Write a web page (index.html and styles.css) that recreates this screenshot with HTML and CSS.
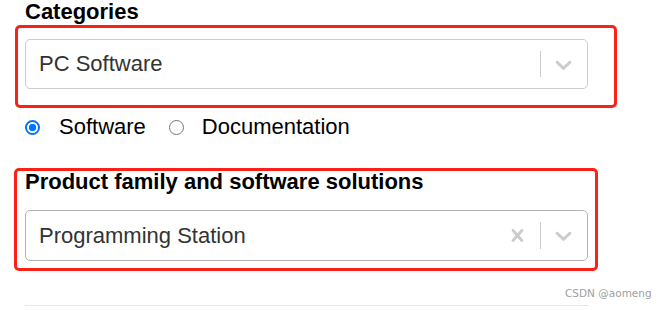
FILE: index.html
```html
<!DOCTYPE html>
<html>
<head>
<meta charset="utf-8">
<link rel="stylesheet" href="styles.css">
</head>
<body>
<div class="page">
  <div class="field">
    <div class="label">Categories</div>
    <div class="select">
      <div class="value">PC Software</div>
      <div class="indicators">
        <span class="sep"></span>
        <span class="ind"><svg viewBox="0 0 20 20" width="27" height="27"><path fill="#ccc" d="M4.516 7.548c0.436-0.446 1.043-0.481 1.576 0l3.908 3.747 3.908-3.747c0.533-0.481 1.141-0.446 1.574 0 0.436 0.445 0.408 1.197 0 1.615-0.406 0.418-4.695 4.502-4.695 4.502-0.217 0.223-0.502 0.335-0.787 0.335s-0.57-0.112-0.789-0.335c0 0-4.287-4.084-4.695-4.502s-0.436-1.170 0-1.615z"/></svg></span>
      </div>
    </div>
  </div>
  <div class="radios">
    <span class="radio checked"></span><span class="rlabel">Software</span>
    <span class="radio"></span><span class="rlabel">Documentation</span>
  </div>
  <div class="field field2">
    <div class="label">Product family and software solutions</div>
    <div class="select select2">
      <div class="value">Programming Station</div>
      <div class="indicators">
        <span class="ind clear"><svg viewBox="0 0 20 20" width="25" height="25"><path fill="#ccc" d="M14.348 14.849c-0.469 0.469-1.229 0.469-1.697 0l-2.651-3.030-2.651 3.029c-0.469 0.469-1.229 0.469-1.697 0-0.469-0.469-0.469-1.229 0-1.697l2.758-3.150-2.759-3.152c-0.469-0.469-0.469-1.228 0-1.697s1.228-0.469 1.697 0l2.652 3.031 2.651-3.031c0.469-0.469 1.228-0.469 1.697 0s0.469 1.229 0 1.697l-2.758 3.152 2.758 3.150c0.469 0.469 0.469 1.229 0 1.698z"/></svg></span>
        <span class="sep"></span>
        <span class="ind"><svg viewBox="0 0 20 20" width="27" height="27"><path fill="#ccc" d="M4.516 7.548c0.436-0.446 1.043-0.481 1.576 0l3.908 3.747 3.908-3.747c0.533-0.481 1.141-0.446 1.574 0 0.436 0.445 0.408 1.197 0 1.615-0.406 0.418-4.695 4.502-4.695 4.502-0.217 0.223-0.502 0.335-0.787 0.335s-0.57-0.112-0.789-0.335c0 0-4.287-4.084-4.695-4.502s-0.436-1.170 0-1.615z"/></svg></span>
      </div>
    </div>
  </div>
  <div class="rule"></div>
</div>
<div class="mark mark1"></div>
<div class="mark mark2"></div>
<div class="watermark">CSDN @aomeng</div>
</body>
</html>
```
FILE: styles.css
```css
html, body {
  margin: 0;
  padding: 0;
  background: #fff;
}
body {
  font-family: "Liberation Sans", Arial, sans-serif;
  position: relative;
  width: 665px;
  height: 310px;
  overflow: hidden;
}
.page {
  padding: 0 0 0 25px;
  width: 563px;
}
.label {
  font-size: 22px;
  line-height: 24px;
  font-weight: bold;
  color: #000;
  margin-bottom: 15px;
}
.select {
  box-sizing: border-box;
  height: 50px;
  border: 1px solid #ccc;
  border-radius: 5px;
  display: flex;
  align-items: center;
}
.select2 {
  border-color: #b3b3b3;
  height: 51px;
}
.value {
  flex: 1;
  padding-left: 13px;
  font-size: 22px;
  line-height: 24px;
  color: #333;
}
.indicators {
  display: flex;
  align-items: stretch;
  align-self: stretch;
}
.sep {
  width: 1px;
  background: #ccc;
  margin: 11px 0;
}
.ind {
  display: flex;
  align-items: center;
  padding: 0 10px 0 9px;
}
.clear {
  padding: 0 10px;
}
.ind svg {
  display: block;
}
.radios {
  display: flex;
  align-items: center;
  margin-top: 26px;
  height: 24px;
  font-size: 22px;
  line-height: 24px;
  color: #000;
}
.radio {
  box-sizing: border-box;
  width: 15px;
  height: 15px;
  border-radius: 50%;
  border: 1px solid #777;
  margin-right: 19px;
  margin-top: 0;
}
.radio.checked {
  border: 2px solid #0075ff;
  background: radial-gradient(circle, #0075ff 0 3.4px, #fff 4px);
}
.rlabel {
  margin-right: 23px;
}
.rlabel + .radio {
  margin-right: 18px;
}
.field2 {
  margin-top: 31px;
}
.field2 .label {
  margin-bottom: 16px;
}
.rule {
  margin-top: 44px;
  height: 1px;
  background: #e6e6e6;
}
.mark {
  position: absolute;
  box-sizing: border-box;
  border: 3px solid #fa2216;
  border-radius: 5px;
}
.mark1 {
  left: 15px;
  top: 25px;
  width: 602px;
  height: 83px;
}
.mark2 {
  left: 14px;
  top: 168px;
  width: 584px;
  height: 103px;
}
.watermark {
  position: absolute;
  left: 565px;
  top: 286px;
  font-family: "DejaVu Sans", sans-serif;
  font-size: 10.5px;
  line-height: 14px;
  color: #a0a0a0;
}
```
